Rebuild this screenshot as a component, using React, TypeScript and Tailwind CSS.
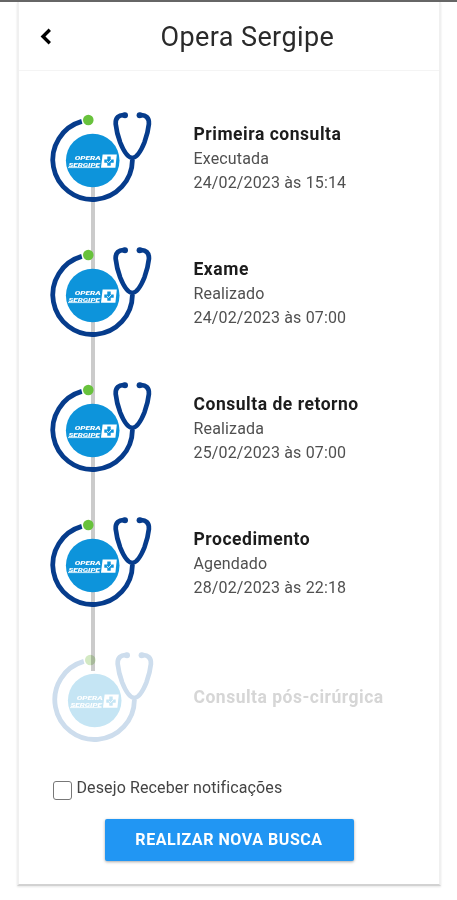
import { useState } from "react";

type Step = {
  title: string;
  status?: string;
  date?: string;
  pending?: boolean;
};

const STEPS: Step[] = [
  { title: "Primeira consulta", status: "Executada", date: "24/02/2023 às 15:14" },
  { title: "Exame", status: "Realizado", date: "24/02/2023 às 07:00" },
  { title: "Consulta de retorno", status: "Realizada", date: "25/02/2023 às 07:00" },
  { title: "Procedimento", status: "Agendado", date: "28/02/2023 às 22:18" },
  { title: "Consulta pós-cirúrgica", pending: true },
];

function StethoscopeBadge({ faded = false }: { faded?: boolean }) {
  const tube = faded ? "#cddded" : "#063c8c";
  const disc = faded ? "#c5e5f4" : "#0d94db";
  const dot = faded ? "#d3e9c3" : "#68c23c";

  return (
    <svg
      width="108"
      height="94"
      viewBox="0 0 108 94"
      fill="none"
      className={faded ? "mix-blend-multiply" : ""}
    >
      <g stroke={tube} strokeLinecap="round" strokeLinejoin="round">
        <path
          d="M33.8 11.4A39.8 39.8 0 1 0 84.4 50"
          strokeWidth="4.8"
          strokeLinecap="butt"
        />
        <path
          d="M76.6 5.2C71 4.4 67.2 8 67.7 14C68.3 20 69.8 26 72.2 32.5C74.8 39 78.6 47.4 84.3 48C90 47.4 93.8 39 96.4 32.5C98.8 26 100.3 20 100.9 14C101.4 8 97.6 4.4 92 5.2"
          strokeWidth="4.7"
        />
      </g>
      <circle cx="77" cy="5.2" r="3" fill={tube} />
      <circle cx="91.6" cy="5.2" r="3" fill={tube} />
      <circle cx="40.3" cy="10" r="5.3" fill={dot} />
      <circle cx="44.7" cy="50.5" r="26.8" fill={disc} />
      <g fill="#fff" fontFamily="Roboto, sans-serif" fontWeight="900" fontStyle="italic">
        <text x="26.8" y="50.2" fontSize="6.2" textLength="26" lengthAdjust="spacingAndGlyphs">
          OPERA
        </text>
        <text x="20.4" y="56.8" fontSize="6.2" textLength="31.5" lengthAdjust="spacingAndGlyphs">
          SERGIPE
        </text>
      </g>
      <path d="M20 57.6H51.6" stroke="#fff" strokeWidth="0.8" />
      <path d="M54.6 44.4H68.8L67.4 57.8H53Z" fill="#fff" />
      <path d="M61 46.4V55.8M56.3 51.1H65.7" stroke={disc} strokeWidth="3.4" />
      <path d="M58.8 51L60.6 52.6L63.4 49.6" stroke="#fff" strokeWidth="0.9" />
    </svg>
  );
}

function TimelineStep({ title, status, date, pending }: Step) {
  return (
    <li className={pending ? "flex h-[110px]" : "flex h-[135px]"}>
      <div className={pending ? "ml-[2px] w-[144px]" : "w-[146px]"}>
        <StethoscopeBadge faded={pending} />
      </div>
      {pending ? (
        <h2 className="mt-[35px] text-[17.5px] leading-6 font-bold tracking-[0.5px] text-[#d6d6d6]">
          {title}
        </h2>
      ) : (
        <div className="mt-[12px] text-[16px] leading-[23.5px] tracking-[0.15px] text-[#505050]">
          <h2 className="text-[17.5px] leading-[25px] font-bold tracking-[0.53px] text-[#1c1c1c]">
            {title}
          </h2>
          <p>{status}</p>
          <p>{date}</p>
        </div>
      )}
    </li>
  );
}

export default function App() {
  const [notify, setNotify] = useState(false);

  return (
    <div className="h-[900px] w-[457px] overflow-hidden border-t-2 border-[#666] bg-white font-[Roboto,sans-serif]">
      <main className="mx-auto h-[884px] w-[424px] border-x-2 border-b-2 border-x-[#f0f0f0] border-b-[#d2d2d2] bg-white shadow-[0_1px_2px_rgba(0,0,0,0.1)]">
        <header className="flex h-[69px] items-center border-b border-[#f4f4f4]">
          <button aria-label="Voltar" className="ml-[18px] w-5">
            <svg width="20" height="20" viewBox="0 0 20 20" fill="none">
              <path d="M12.8 3.8L6 10.5L12.8 17.2" stroke="#000" strokeWidth="3.4" />
            </svg>
          </button>
          <h1 className="mt-[2px] ml-[104px] text-[27px] leading-9 tracking-[0.4px] text-[#2a2a2a]">
            Opera Sergipe
          </h1>
        </header>

        <section className="relative">
          {/* rail joining the steps */}
          <div className="absolute top-[104px] left-[72px] h-[496px] w-[4px] bg-[#cbcbcb]" />
          <ol className="relative pt-[39px] pl-[29px]">
            {STEPS.map((step) => (
              <TimelineStep key={step.title} {...step} />
            ))}
          </ol>
        </section>

        <label className="mt-[21px] ml-[34px] flex">
          <input
            type="checkbox"
            checked={notify}
            onChange={(e) => setNotify(e.target.checked)}
            className="h-[19px] w-[19px] appearance-none rounded-[3px] border border-[#777] bg-white checked:bg-[#2196f3]"
          />
          <span className="-mt-[5px] ml-[5px] text-[16px] leading-6 tracking-[0.12px] text-[#444]">
            Desejo Receber notificações
          </span>
        </label>
        <button className="mt-[19px] ml-[86px] h-[42px] w-[249px] rounded-[2px] bg-[#2196f3] text-[16px] font-bold tracking-[0.56px] text-white shadow-[0_1px_3px_rgba(0,0,0,0.35)]">
          REALIZAR NOVA BUSCA
        </button>
      </main>
    </div>
  );
}
